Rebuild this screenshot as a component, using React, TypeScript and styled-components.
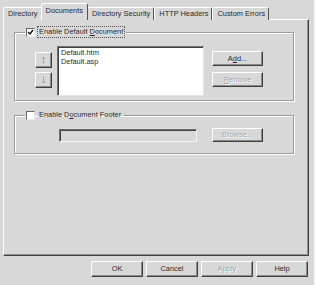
import React from "react";
import styled, { createGlobalStyle } from "styled-components";

const Global = createGlobalStyle`
  html, body { margin: 0; padding: 0; background: #d8d8d8; }
  body { font-family: "Liberation Sans", Arial, sans-serif; }
`;

const Window = styled.div`
  width: 315px;
  height: 285px;
  box-sizing: border-box;
  background: #d8d8d8;
  padding: 4px 6px 0 3px;
  display: flex;
  flex-direction: column;
  font-family: "Liberation Sans", Arial, sans-serif;
  font-size: 7.4px;
  color: #2a2a2a;
  border-right: 1px solid #f4f4f4;
`;

const TabRow = styled.div`
  display: flex;
  align-items: flex-end;
  height: 16px;
  margin-bottom: -1px;
  position: relative;
  z-index: 1;
`;

const Tab = styled.div<{ $active?: boolean }>`
  box-sizing: border-box;
  height: ${(p) => (p.$active ? 17 : 13)}px;
  padding: ${(p) => (p.$active ? "2px 4px 0 4px" : "1px 3px 0 4px")};
  margin: ${(p) => (p.$active ? "0 -1px" : "0")};
  background: #d8d8d8;
  border-top: 1px solid #fff;
  border-left: 1px solid #fff;
  border-right: 1px solid #555;
  border-radius: 2px 2px 0 0;
  line-height: 10px;
  white-space: nowrap;
  position: relative;
  z-index: ${(p) => (p.$active ? 2 : 0)};
`;

const Panel = styled.div`
  width: 306px;
  height: 237px;
  box-sizing: border-box;
  border-top: 1px solid #fff;
  border-left: 1px solid #fff;
  border-right: 1px solid #404040;
  border-bottom: 1px solid #404040;
  box-shadow: inset -1px -1px 0 #909090;
  padding: 7px 0 0 10px;
  display: flex;
  flex-direction: column;
`;

const Group = styled.fieldset<{ $pt: number; $pb: number; $mt: number }>`
  width: 280px;
  box-sizing: border-box;
  margin: ${(p) => p.$mt}px 0 0 0;
  padding: ${(p) => p.$pt}px 0 ${(p) => p.$pb}px 0;
  border: 1px solid #9c9c9c;
  box-shadow: 1px 1px 0 #fff, inset 1px 1px 0 #fff;
  min-width: 0;
`;

const Legend = styled.legend`
  display: flex;
  align-items: center;
  gap: 3px;
  height: 10px;
  padding: 0 2px 0 1px;
  margin-left: 10px;
  line-height: 10px;
`;

const Box = styled.span`
  width: 9px;
  height: 9px;
  box-sizing: border-box;
  background: #fff;
  border-top: 1px solid #6a6a6a;
  border-left: 1px solid #6a6a6a;
  border-right: 1px solid #e8e8e8;
  border-bottom: 1px solid #e8e8e8;
  display: flex;
  align-items: center;
  justify-content: center;
`;

const Focus = styled.span<{ $focus?: boolean }>`
  outline: ${(p) => (p.$focus ? "1px dotted #555" : "none")};
  padding: 0 1px;
`;

const Row = styled.div<{ $pl: number }>`
  display: flex;
  align-items: flex-start;
  padding-left: ${(p) => p.$pl}px;
`;

const ArrowCol = styled.div`
  display: flex;
  flex-direction: column;
  gap: 4px;
  padding-top: 6px;
  margin-right: 5px;
`;

const ArrowBtn = styled.div`
  width: 17px;
  height: 16px;
  box-sizing: border-box;
  background: #d8d8d8;
  border-top: 1px solid #fff;
  border-left: 1px solid #fff;
  border-right: 1px solid #404040;
  border-bottom: 1px solid #404040;
  box-shadow: inset -1px -1px 0 #8a8a8a;
  display: flex;
  align-items: center;
  justify-content: center;
`;

const ListBox = styled.div`
  width: 147px;
  height: 50px;
  box-sizing: border-box;
  background: #fff;
  border-top: 1px solid #707070;
  border-left: 1px solid #707070;
  border-right: 1px solid #e6e6e6;
  border-bottom: 1px solid #e6e6e6;
  box-shadow: inset 1px 1px 0 #404040;
  padding: 2px 3px;
  line-height: 8.5px;
  margin-right: 8px;
`;

const BtnCol = styled.div`
  display: flex;
  flex-direction: column;
  gap: 6px;
  padding-top: 5px;
`;

const Button = styled.div<{ $disabled?: boolean; $w?: number; $h?: number }>`
  width: ${(p) => p.$w ?? 51}px;
  height: ${(p) => p.$h ?? 15}px;
  box-sizing: border-box;
  background: #d8d8d8;
  border-top: 1px solid #fff;
  border-left: 1px solid #fff;
  border-right: 1px solid #404040;
  border-bottom: 1px solid #404040;
  box-shadow: inset -1px -1px 0 #8a8a8a;
  display: flex;
  align-items: center;
  justify-content: center;
  line-height: 10px;
  color: ${(p) => (p.$disabled ? "#a6a6a6" : "#2a2a2a")};
  text-shadow: ${(p) => (p.$disabled ? "1px 1px 0 #fff" : "none")};
`;

const TextField = styled.div`
  width: 138px;
  height: 13px;
  box-sizing: border-box;
  background: #d8d8d8;
  border-top: 1px solid #707070;
  border-left: 1px solid #707070;
  border-right: 1px solid #f4f4f4;
  border-bottom: 1px solid #f4f4f4;
  box-shadow: inset 1px 1px 0 #404040;
  margin-right: 15px;
  margin-top: 1px;
`;

const Footer = styled.div`
  display: flex;
  justify-content: flex-end;
  gap: 3px;
  margin-top: 5px;
`;

const Check = () => (
  <svg width="7" height="7" viewBox="0 0 7 7">
    <path d="M1 3 L3 5 L6 1" stroke="#111" strokeWidth="1.4" fill="none" />
  </svg>
);

const Arrow = ({ up }: { up?: boolean }) => (
  <svg width="5" height="8" viewBox="0 0 5 8">
    <g transform={up ? undefined : "rotate(180 2.5 4)"} stroke="#a8a8a8" strokeWidth="1" fill="none">
      <path d="M2.5 1 V7.5" />
      <path d="M0.8 2.8 L2.5 1 L4.2 2.8" />
    </g>
  </svg>
);

export default function App() {
  return (
    <>
      <Global />
      <Window>
        <TabRow>
          <Tab>Directory</Tab>
          <Tab $active>Documents</Tab>
          <Tab>Directory Security</Tab>
          <Tab>HTTP Headers</Tab>
          <Tab>Custom Errors</Tab>
        </TabRow>
        <Panel>
          <Group $pt={9} $pb={4} $mt={0}>
            <Legend>
              <Box>
                <Check />
              </Box>
              <Focus $focus>
                Enable Default <u>D</u>ocument
              </Focus>
            </Legend>
            <Row $pl={20}>
              <ArrowCol>
                <ArrowBtn>
                  <Arrow up />
                </ArrowBtn>
                <ArrowBtn>
                  <Arrow />
                </ArrowBtn>
              </ArrowCol>
              <ListBox>
                <div>Default.htm</div>
                <div>Default.asp</div>
              </ListBox>
              <BtnCol>
                <Button>
                  A<u>d</u>d...
                </Button>
                <Button $disabled>
                  <u>R</u>emove
                </Button>
              </BtnCol>
            </Row>
          </Group>
          <Group $pt={8} $pb={11} $mt={9}>
            <Legend>
              <Box />
              <Focus>
                Enable D<u>o</u>cument Footer
              </Focus>
            </Legend>
            <Row $pl={44}>
              <TextField />
              <Button $disabled $h={14}>
                Browse...
              </Button>
            </Row>
          </Group>
        </Panel>
        <Footer>
          <Button $w={52} $h={16}>OK</Button>
          <Button $w={52} $h={16}>Cancel</Button>
          <Button $w={52} $h={16} $disabled>Apply</Button>
          <Button $w={52} $h={16}>Help</Button>
        </Footer>
      </Window>
    </>
  );
}
